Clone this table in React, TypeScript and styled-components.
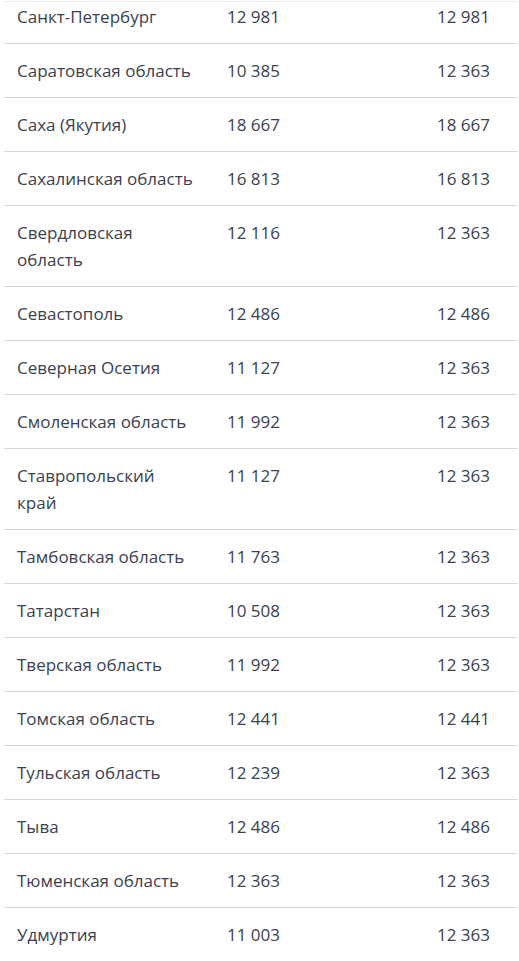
import React from 'react';
import styled, {createGlobalStyle} from 'styled-components';

type Region = {
  name: string;
  actual: string;
  minimum: string;
};

const regions: Region[] = [
  {name: 'Санкт-Петербург', actual: '12 981', minimum: '12 981'},
  {name: 'Саратовская область', actual: '10 385', minimum: '12 363'},
  {name: 'Саха (Якутия)', actual: '18 667', minimum: '18 667'},
  {name: 'Сахалинская область', actual: '16 813', minimum: '16 813'},
  {name: 'Свердловская область', actual: '12 116', minimum: '12 363'},
  {name: 'Севастополь', actual: '12 486', minimum: '12 486'},
  {name: 'Северная Осетия', actual: '11 127', minimum: '12 363'},
  {name: 'Смоленская область', actual: '11 992', minimum: '12 363'},
  {name: 'Ставропольский край', actual: '11 127', minimum: '12 363'},
  {name: 'Тамбовская область', actual: '11 763', minimum: '12 363'},
  {name: 'Татарстан', actual: '10 508', minimum: '12 363'},
  {name: 'Тверская область', actual: '11 992', minimum: '12 363'},
  {name: 'Томская область', actual: '12 441', minimum: '12 441'},
  {name: 'Тульская область', actual: '12 239', minimum: '12 363'},
  {name: 'Тыва', actual: '12 486', minimum: '12 486'},
  {name: 'Тюменская область', actual: '12 363', minimum: '12 363'},
  {name: 'Удмуртия', actual: '11 003', minimum: '12 363'},
];

const GlobalStyle = createGlobalStyle`
  html, body {
    margin: 0;
    padding: 0;
    background: #ffffff;
  }
  body {
    font-family: "Open Sans", "Liberation Sans", sans-serif;
    color: #3a4150;
  }
`;

export default function App() {
  return (
    <>
      <GlobalStyle />
      <Table>
        {regions.map((r, i) => (
          <Row key={r.name} first={i === 0}>
            <Cell>{r.name}</Cell>
            <Cell>{r.actual}</Cell>
            <Cell>{r.minimum}</Cell>
          </Row>
        ))}
      </Table>
    </>
  );
}

// table is scrolled, so the first row is cut at the top
const Table = styled.div`
  margin: 1px 2px 0 4px;
  border-top: 1px solid #ececef;
`;

type RowProps = {first?: boolean};
const Row = styled.div<RowProps>`
  display: grid;
  grid-template-columns: 210px 210px 1fr;
  border-bottom: 1px solid #d6d6da;
  padding: ${({first}) => (first ? '1px 0 13px' : '13px 0')};
`;

const Cell = styled.div`
  padding: 0 18px 0 13px;
  font-size: 17px;
  line-height: 27px;
  color: #3a4150;
`;
